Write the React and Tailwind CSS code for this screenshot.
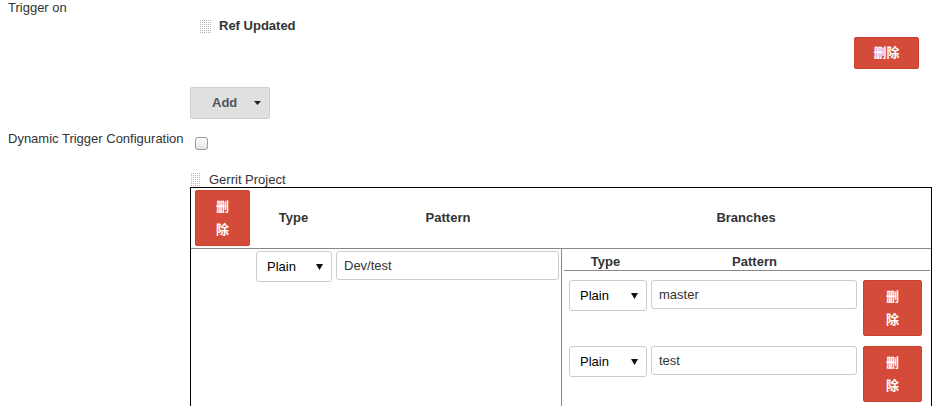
import React from "react";

function Grip({ cols = 6, rows = 7 }) {
  const dots = [];
  for (let x = 0; x < cols; x++) {
    for (let y = 0; y < rows; y++) {
      dots.push(<rect key={x + "-" + y} x={x * 2} y={y * 2} width="1" height="1" fill="#b5b5b5" />);
    }
  }
  return (
    <svg width={cols * 2 - 1} height={rows * 2 - 1} className="block shrink-0">
      {dots}
    </svg>
  );
}

function DelStacked({ className = "" }) {
  return (
    <div
      className={
        "flex flex-col items-center justify-center rounded-[2px] border border-[#c9402f] bg-[#d44b3a] font-bold text-white leading-[23px] " +
        className
      }
    >
      <span>删</span>
      <span>除</span>
    </div>
  );
}

function Select({ className = "" }) {
  return (
    <div
      className={
        "flex items-center justify-between rounded-[3px] border border-[#cccccc] bg-white pl-[10px] pr-[8px] text-black " +
        className
      }
    >
      <span>Plain</span>
      <svg width="7" height="6" viewBox="0 0 7 6" className="block">
        <path d="M0 0 L7 0 L3.5 6 Z" fill="#111" />
      </svg>
    </div>
  );
}

function Input({ value, className = "" }) {
  return (
    <div
      className={
        "flex items-center rounded-[3px] border border-[#cccccc] bg-white pl-[7px] text-[#333] " + className
      }
    >
      {value}
    </div>
  );
}

export default function App() {
  return (
    <div
      className="h-[406px] w-[935px] overflow-hidden bg-white text-[13px] leading-[16px] text-[#333]"
      style={{ fontFamily: '"Liberation Sans", Arial, "Noto Sans CJK SC", sans-serif' }}
    >
      {/* Trigger on */}
      <div className="flex">
        <div className="w-[190px] shrink-0 pl-[8px]">Trigger on</div>
        <div className="flex flex-1 flex-col">
          <div className="ml-[10px] mt-[18px] flex h-[16px] items-center gap-[8px]">
            <Grip />
            <span className="font-bold">Ref Updated</span>
          </div>
          <div className="mr-[16px] mt-[3px] flex justify-end">
            <div className="flex h-[32px] w-[65px] items-center justify-center rounded-[2px] border border-[#c9402f] bg-[#d44b3a] font-bold text-white">
              删除
            </div>
          </div>
          <div className="mt-[18px] flex h-[32px] w-[80px] items-center rounded-[2px] border border-[#cfcfcf] bg-[#e0e0e0] pl-[21px] font-bold text-[#555]">
            <span>Add</span>
            <svg width="7" height="4" viewBox="0 0 7 4" className="ml-[17px] block">
              <path d="M0 0 L7 0 L3.5 4 Z" fill="#222" />
            </svg>
          </div>
        </div>
      </div>

      {/* Dynamic Trigger Configuration */}
      <div className="mt-[12px] flex items-start">
        <div className="w-[190px] shrink-0 pl-[8px]">Dynamic Trigger Configuration</div>
        <div className="ml-[5px] mt-[6px] h-[13px] w-[13px] rounded-[3px] border border-[#999] bg-gradient-to-b from-white to-[#e4e4e4]" />
      </div>

      {/* Gerrit Project */}
      <div className="ml-[190px] mt-[22px]">
        <div className="flex h-[15px] items-center gap-[9px] pl-[1px]">
          <Grip cols={5} rows={7} />
          <span className="leading-[15px]">Gerrit Project</span>
        </div>
        <div className="w-[742px] border border-black">
          {/* header */}
          <div className="flex h-[61px] border-b border-[#888] font-bold">
            <div className="w-[61px] shrink-0 pl-[4px] pt-[2px]">
              <DelStacked className="h-[56px] w-[55px]" />
            </div>
            <div className="flex w-[83px] shrink-0 items-center justify-center">Type</div>
            <div className="flex w-[226px] shrink-0 items-center justify-center">Pattern</div>
            <div className="flex flex-1 items-center justify-center">Branches</div>
          </div>
          {/* body */}
          <div className="flex h-[200px]">
            <div className="w-[61px] shrink-0" />
            <div className="w-[83px] shrink-0 pl-[4px] pt-[2px]">
              <Select className="h-[31px] w-[76px]" />
            </div>
            <div className="w-[226px] shrink-0 pl-[1px] pt-[2px]">
              <Input value="Dev/test" className="h-[29px] w-[223px]" />
            </div>
            <div className="flex-1 border-l border-[#888] pl-[2px] pr-[1px]">
              <div className="flex h-[22px] items-end border-b border-[#888] font-bold">
                <div className="w-[83px] text-center">Type</div>
                <div className="w-[215px] text-center">Pattern</div>
              </div>
              {["master", "test"].map((v) => (
                <div key={v} className="mt-[9px] flex h-[57px]">
                  <div className="w-[83px] shrink-0 pl-[5px]">
                    <Select className="h-[31px] w-[78px]" />
                  </div>
                  <div className="w-[215px] shrink-0 pl-[4px]">
                    <Input value={v} className="h-[29px] w-[206px]" />
                  </div>
                  <div className="pl-[1px]">
                    <DelStacked className="h-[56px] w-[59px]" />
                  </div>
                </div>
              ))}
            </div>
          </div>
        </div>
      </div>
    </div>
  );
}
